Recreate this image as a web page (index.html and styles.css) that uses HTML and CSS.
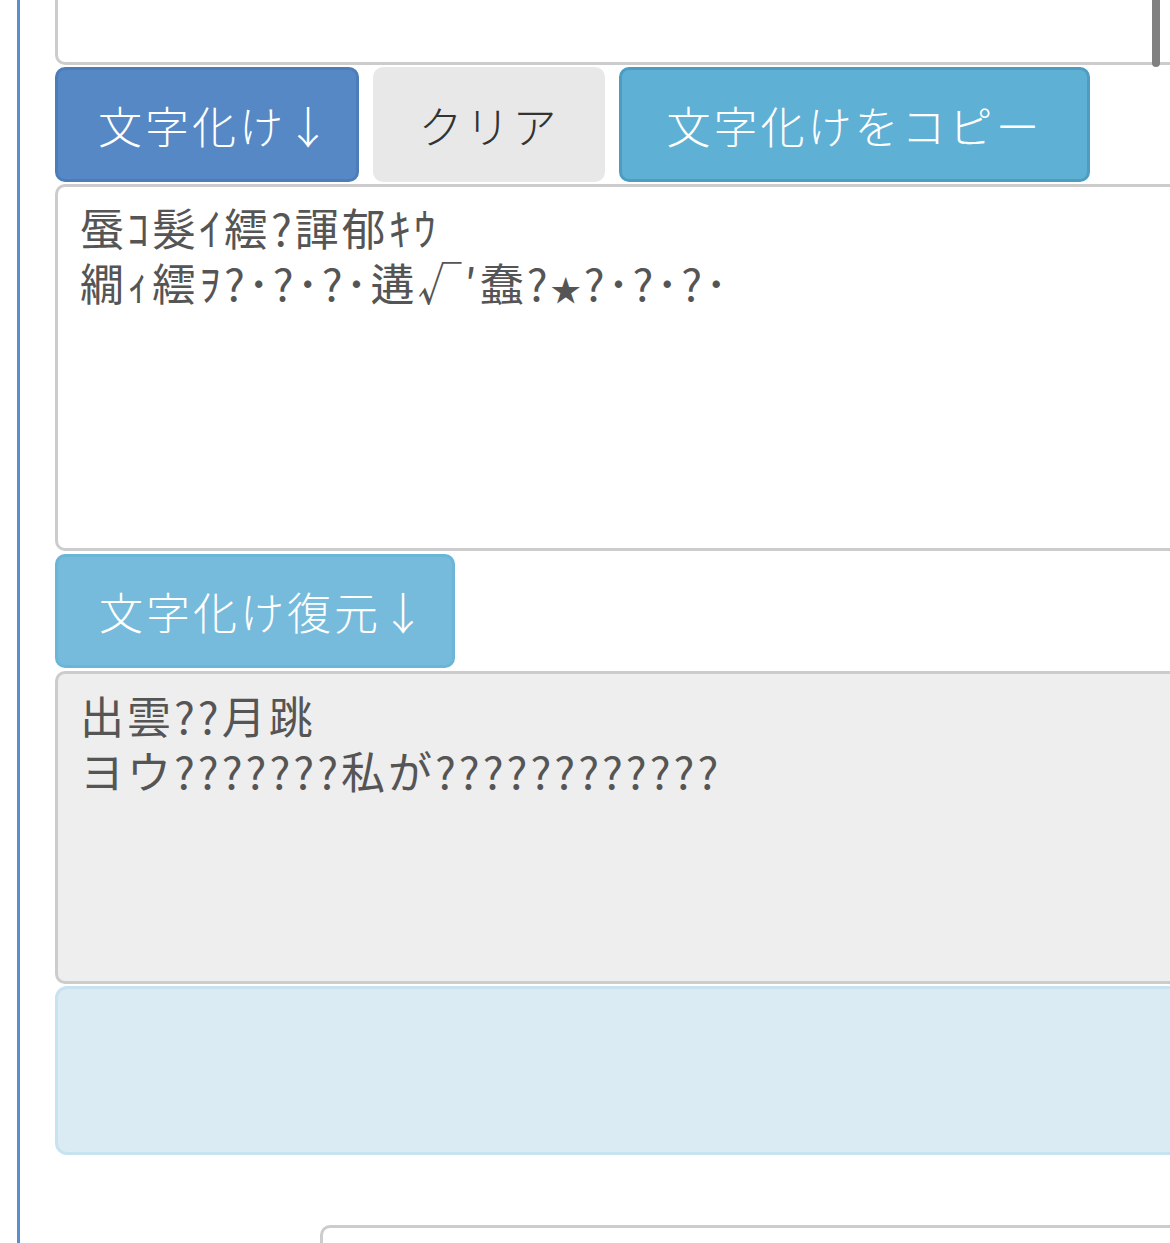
FILE: index.html
```html
<!DOCTYPE html>
<html lang="ja">
  <head>
    <meta charset="UTF-8" />
    <meta name="viewport" content="width=device-width, initial-scale=1.0" />
    <title>文字化け</title>
    <link rel="stylesheet" href="styles.css">
  </head>
  <body>
    <div class="page">
      <div class="main">
        <div class="box source"></div>

        <div class="btn-row">
          <button class="btn btn-primary">文字化け<span class="arrow">↓</span></button>
          <button class="btn btn-default">クリア</button>
          <button class="btn btn-info">文字化けをコピー</button>
        </div>

        <div class="box result">蜃ｺ髮ｲ繧?諢郁ｷｳ
繝ｨ繧ｦ?･?･?･遘√′蠢?<span class="star">★</span>?･?･?･</div>

        <button class="btn btn-restore">文字化け復元<span class="arrow">↓</span></button>

        <div class="box restored">出雲??月跳
ヨウ???????私が????????????</div>

        <div class="alert"></div>

        <div class="box next"></div>
      </div>
    </div>
    <div class="scroll-thumb"></div>
  </body>
</html>
```

FILE: styles.css
```css
* {
  box-sizing: border-box;
}

html, body {
  margin: 0;
  overflow: hidden;
  height: 1243px;
  background: #ffffff;
}

body {
  font-family: "Noto Sans CJK JP", "Noto Sans", sans-serif;
  color: #555555;
}

.page {
  padding-left: 17px;
}

.main {
  width: 1250px;
  min-height: 1500px;
  border-left: 3px solid #5b8fcc;
  padding-left: 35px;
}

.box {
  border: 3px solid #cccccc;
  border-radius: 10px;
  background: #ffffff;
  font-size: 44px;
  line-height: 55px;
  letter-spacing: 3px;
  white-space: pre-line;
  padding: 13px 22px;
}

.star {
  font-size: 30px;
}

.source {
  height: 200px;
  margin-top: -135px;
}

.btn-row {
  display: flex;
  gap: 14px;
  margin-top: 2px;
}

.btn {
  height: 115px;
  border: 3px solid transparent;
  border-radius: 10px;
  padding: 0;
  font-family: inherit;
  font-size: 44px;
  font-weight: 300;
  letter-spacing: 3px;
  line-height: 1;
  white-space: nowrap;
  color: #ffffff;
}

/* the arrow glyph is full width, trim its right side */
.btn .arrow {
  letter-spacing: 0;
  margin-right: -14px;
}

.btn-primary {
  width: 304px;
  background: #5588c4;
  border-color: #4d7db9;
}

.btn-default {
  width: 232px;
  background: #e8e8e8;
  border-color: #e8e8e8;
  color: #333333;
}

.btn-info {
  width: 471px;
  background: #5fb0d5;
  border-color: #4f9cc1;
}

.result {
  height: 367px;
  margin-top: 2px;
}

.btn-restore {
  display: block;
  width: 400px;
  height: 114px;
  margin-top: 3px;
  background: #76bbdb;
  border-color: #6bb5d8;
}

.restored {
  height: 313px;
  margin-top: 3px;
  padding-top: 14px;
  background: #eeeeee;
}

.alert {
  height: 169px;
  margin-top: 2px;
  border: 3px solid #c6e3ef;
  border-radius: 12px;
  background: #dbebf3;
}

.next {
  height: 120px;
  margin-top: 70px;
  margin-left: 265px;
}

.scroll-thumb {
  position: absolute;
  top: -10px;
  left: 1152px;
  width: 8px;
  height: 77px;
  border-radius: 4px;
  background: #808080;
}
```
